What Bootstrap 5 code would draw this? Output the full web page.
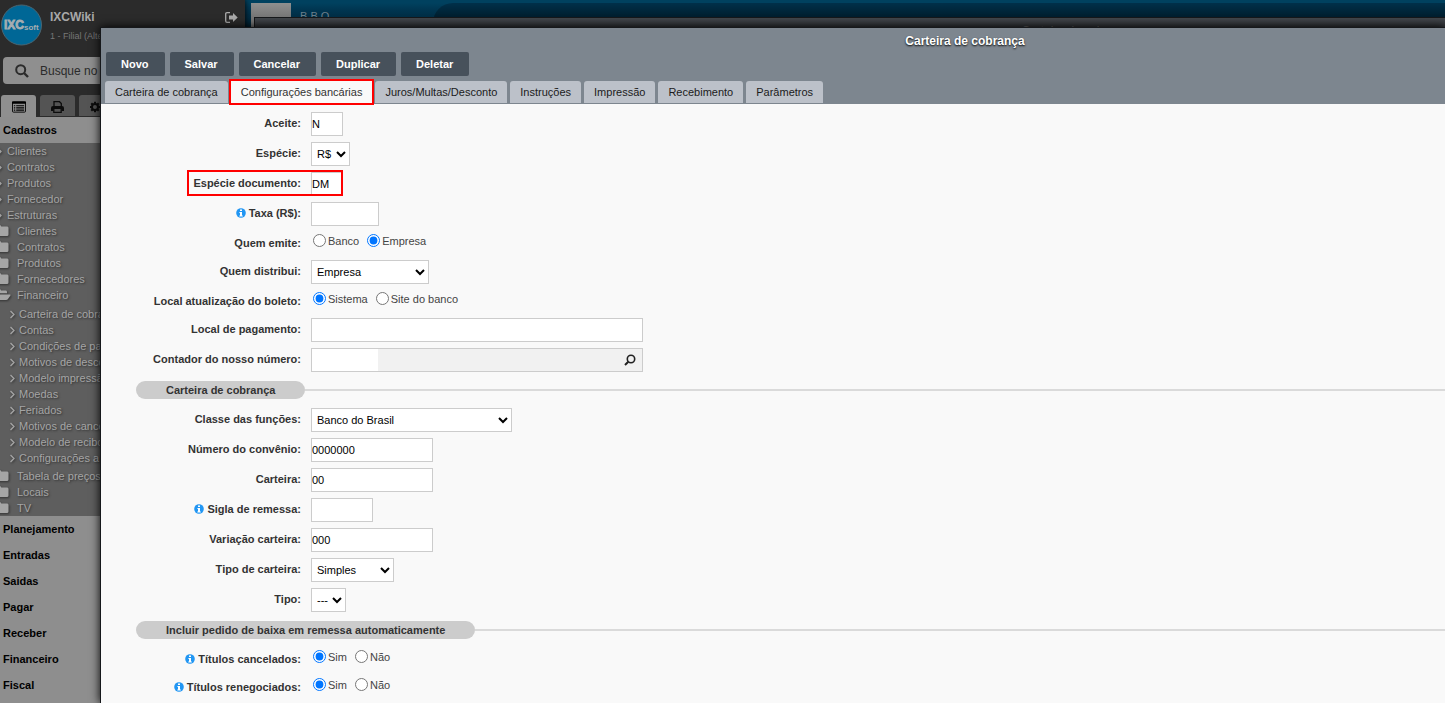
<!DOCTYPE html>
<html lang="pt-BR">
<head>
<meta charset="utf-8">
<meta name="viewport" content="width=device-width, initial-scale=1">
<title>IXCWiki - Carteira de cobrança</title>
<link href="https://cdn.jsdelivr.net/npm/bootstrap@5.3.0/dist/css/bootstrap.min.css" rel="stylesheet">
<style>
  body { font: 11px/16px "Liberation Sans", Arial, sans-serif; color: #333; background: #003f5c; }
  a { color: inherit; text-decoration: none; }
  button, input, select { font: inherit; color: #000; }
  .desktop { height: 100vh; }

  /* Sidebar */
  .side { width: 245px; background: #8e8e8e; color: #000; box-shadow: 0 0 6px #000; z-index: 1; }
  .side-top { background: #2b2b2b; }
  .profile { height: 57px; padding: 4px 7px 0 0; color: #aaa; }
  .profile-name { font-size: 12px; margin-top: 5px; color: #a8a8a8; }
  .profile-branch { font-size: 9px; color: #777; margin-top: 3px; }
  .side-search { height: 27px; margin: 0 3px; padding-left: 12px; border-radius: 4px; background: #8f8f8f; }
  .side-search input { background: none; border: 0; outline: 0; padding: 0; margin-left: 3px; font-size: 12px; color: #2b2b2b; }
  .side-search input::placeholder { color: #2b2b2b; opacity: 1; }
  .side-tabs { padding: 11px 0 0 1px; gap: 4px; }
  .side-tabs button { width: 35px; height: 21px; border: 0; border-radius: 3px 3px 0 0; background: #545454; padding: 0; margin-bottom: 1px; }
  .side-tabs .on { background: #8f8f8f; height: 22px; margin-bottom: 0; }
  .side-group { height: 26px; line-height: 26px; padding-left: 3px; font-weight: bold; }
  .tree { background: #5e5e5e; color: #a5a5a5; text-shadow: 1px 1px 2px #333; }
  .tree a { display: flex; align-items: center; height: 16px; white-space: nowrap; }
  .tree svg { flex: none; filter: drop-shadow(1px 1px 1px #333); }
  .leaf svg { margin: 0 4px 0 -5px; }
  .folder svg { margin: 0 8px 2px -5px; }
  .folder .expanded svg { margin-right: 6px; }
  .subtree { padding: 3px 0 2px 8px; }
  .subtree svg { margin-right: 3px; }

  /* Workspace behind the windows */
  .workspace { background: linear-gradient(#00415f 3px, #003550 10px, #002436 27px); }
  .work-banner { margin: 3px 0 0 188px; height: 60px; border-radius: 20px 0 0 0; background: linear-gradient(#00304a, #001926 18px); }
  .work-logo { left: 6px; top: 3px; width: 40px; height: 60px; background: linear-gradient(#8f8f8f, #777 14px); }
  .work-title { left: 55px; top: 8px; font-size: 11px; color: #6b7f8a; }

  /* Windows */
  .win { border: 1px solid #16181b; border-right: 0; border-bottom: 0; right: 0; }
  .win-back { left: 254px; top: 17px; height: 40px; padding: 5px 0 0 455px; z-index: 2; background: linear-gradient(#43474c, #2f3236 10px); color: #666; font-size: 12px; }
  .win-front { left: 100px; top: 27px; bottom: 0; z-index: 3; background: #f9f9f9; box-shadow: 0 0 9px #000; overflow: hidden; }
  .win-head { background: #7d868f; padding-bottom: 1px; }
  .win-title { font-size: 12px; line-height: 16px; padding: 5px 0 3px 384px; color: #fff; text-shadow: 0 1px 2px #000; }
  .tools { padding-left: 5px; gap: 5px; }
  .tools button { height: 24px; padding: 0 16px 0 15px; border: 0; border-radius: 2px; background: #47515b; color: #fff; font-weight: bold; }
  .tabbar { padding: 5px 0 0 4px; gap: 3px; }
  .tabbar a { height: 22px; line-height: 22px; padding: 0 10px; border-radius: 3px 3px 0 0; background: #bcc1c9; color: #1b1b1b; }
  .tabbar .on { background: #f9f9f9; color: #333; border-radius: 0; }
  .marked { outline: 2px solid #f00; }

  /* Form */
  .sheet { margin-left: 11px; padding-top: 8px; gap: 6px; }
  .line { gap: 10px; }
  .line > .caption { width: 189px; line-height: 22px; font-weight: bold; text-align: right; flex: none; color: #333; }
  .line input[type=text], .line select, .lookup { height: 24px; border: 1px solid #ccc; border-radius: 0; background: #fff; }
  .line input[type=text] { padding: 0; }
  .line select { padding: 0 1px; }
  .radios { height: 18px; line-height: 18px; padding-left: 2px; gap: 8px; color: #444; }
  .radios label { display: flex; align-items: center; gap: 2px; }
  .radios input { width: 13px; height: 13px; margin: 0 0 2px; }
  .w-tiny { width: 32px; } .w-opt { width: 39px; } .w-dash { width: 35px; } .w-tax { width: 68px; } .w-sig { width: 62px; }
  .w-kind { width: 83px; } .w-dist { width: 118px; } .w-code { width: 122px; } .w-bank { width: 201px; } .w-full { width: 332px; }
  .lookup { background: #f1f1f1; }
  .line .lookup input { width: 66px; height: 22px; border: 0; }
  .lookup button { border: 0; background: none; padding: 0 6px; display: flex; align-items: center; }
  .sect { height: 24px; margin-left: 24px; }
  .sect h2 { margin: 0; height: 18px; padding: 0 30px; border-radius: 9px; background: #ccc; font-size: 11px; line-height: 18px; font-weight: bold; }
  .sect span { height: 2px; background: #dadada; }
  .mark-box { left: 75px; top: -2px; width: 156px; height: 26px; border: 2px solid #f00; pointer-events: none; }
  .info { margin: -2px 3px 0 0; }
</style>
</head>
<body>
<svg class="d-none" aria-hidden="true">
  <symbol id="chev" viewBox="0 0 8 9"><path d="M2.500 1l3.500 3.500L2.500 8" fill="none" stroke="#a5a5a5" stroke-width="1.300"/></symbol>
  <symbol id="fold" viewBox="0 0 14 11"><path d="M0 1.500Q0 0 1.500 0h3.300Q6 0 6.300 1.500h6Q13.500 1.500 13.500 3v6.500Q13.500 11 12 11H1.500Q0 11 0 9.500z" fill="#a5a5a5"/></symbol>
  <symbol id="open" viewBox="0 0 16 11"><path d="M0 9V1.500Q0 0 1.500 0h3Q6 0 6 1.500h5Q12 1.500 12 3v1.300H5Q3.500 4.300 2.600 5.500z" fill="#a5a5a5"/><path d="M1 11l2.700-4.500Q4.200 5.400 5.500 5.400H15q1 0 .4 1L13 10q-.6 1-2 1z" fill="#a5a5a5"/></symbol>
  <symbol id="inf" viewBox="0 0 10 10"><circle cx="5" cy="5" r="4.800" fill="#2196f3"/><path d="M4 1.500h2v1.600H4zM3.400 4H6v3.400h.8v1H3.300v-1H4V5h-.6z" fill="#fff"/></symbol>
</svg>

<div class="desktop d-flex position-relative overflow-hidden">
  <aside class="side flex-shrink-0 overflow-hidden">
    <div class="side-top">
      <div class="profile d-flex">
        <svg width="42" height="43" viewBox="0 0 42 43" role="img" aria-label="IXCsoft"><circle cx="21.500" cy="21" r="20" fill="#006796" stroke="#4b6571"/><text x="4" y="25" font-size="12" font-weight="bold" fill="#a5adb1" stroke="#a5adb1" stroke-width=".8">IXC</text><text x="24" y="26" font-size="8" font-weight="bold" fill="#a5adb1">soft</text></svg>
        <div class="ms-2 ps-0 flex-grow-1">
          <div class="profile-name fw-bold">IXCWiki</div>
          <div class="profile-branch">1 - Filial (Alternativa)</div>
        </div>
        <a href="#" aria-label="Sair"><svg class="mt-2" width="13" height="11" viewBox="0 0 13 11"><path d="M5 .7H2Q.7.700.7 2v7q0 1.300 1.300 1.300h3" fill="none" stroke="#aaa" stroke-width="1.300"/><path d="M4 3.500h4V1l4.700 4.500L8 10V7.500H4z" fill="#aaa"/></svg></a>
      </div>
      <div class="side-search d-flex align-items-center">
        <svg class="me-2" width="14" height="14" viewBox="0 0 14 14"><circle cx="5.700" cy="5.700" r="4.500" fill="none" stroke="#2b2b2b" stroke-width="2"/><path d="M9 9l4 4" stroke="#2b2b2b" stroke-width="2.400"/></svg>
        <input class="flex-grow-1" type="text" aria-label="Busca" placeholder="Busque no menu">
      </div>
      <div class="side-tabs d-flex align-items-end">
        <button class="on" type="button" aria-label="Menu"><svg width="14" height="12" viewBox="0 0 15 12"><rect x=".5" y=".5" width="14" height="11" rx="1" fill="none" stroke="#000"/><path d="M0 0h15v2.500H0zM2 4h1.500v1.300H2zM4.500 4H13v1.300H4.500zM2 6.300h1.500v1.300H2zM4.500 6.300H13v1.300H4.500zM2 8.600h1.500v1.300H2zM4.500 8.600H13v1.300H4.500z"/></svg></button>
        <button type="button" aria-label="Relatórios"><svg width="13" height="12" viewBox="0 0 13 12"><path d="M3 6V.7h5.500L10.300 2.500V6" fill="none" stroke="#0c0c0c" stroke-width="1.300"/><path d="M0 7q0-2 2-2h9q2 0 2 2v3h-2.500V8h-8v2H0z" fill="#0c0c0c"/><path d="M2.800 8v3.300h7.400V8" fill="none" stroke="#0c0c0c" stroke-width="1.300"/></svg></button>
        <button type="button" aria-label="Configurações"><svg width="14" height="12" viewBox="0 0 14 12"><circle cx="5" cy="6" r="3" fill="none" stroke="#0c0c0c" stroke-width="2"/><path d="M5 .8v2M5 9.200v2M0 6h2M8 6h2M1.300 2.300l1.400 1.400M7.300 8.300l1.400 1.400M1.300 9.700l1.400-1.400M7.300 3.700l1.400-1.400" stroke="#0c0c0c" stroke-width="2"/><circle cx="12" cy="3" r="1.500"/><circle cx="12" cy="9" r="1.500"/></svg></button>
      </div>
    </div>
    <nav>
      <a class="side-group d-block" href="#">Cadastros</a>
      <div class="tree">
        <div class="leaf">
          <a href="#"><svg width="8" height="9"><use href="#chev"/></svg>Clientes</a>
          <a href="#"><svg width="8" height="9"><use href="#chev"/></svg>Contratos</a>
          <a href="#"><svg width="8" height="9"><use href="#chev"/></svg>Produtos</a>
          <a href="#"><svg width="8" height="9"><use href="#chev"/></svg>Fornecedor</a>
          <a href="#"><svg width="8" height="9"><use href="#chev"/></svg>Estruturas</a>
        </div>
        <div class="folder">
          <a href="#"><svg width="14" height="11"><use href="#fold"/></svg>Clientes</a>
          <a href="#"><svg width="14" height="11"><use href="#fold"/></svg>Contratos</a>
          <a href="#"><svg width="14" height="11"><use href="#fold"/></svg>Produtos</a>
          <a href="#"><svg width="14" height="11"><use href="#fold"/></svg>Fornecedores</a>
          <a class="expanded" href="#"><svg width="16" height="11"><use href="#open"/></svg>Financeiro</a>
        </div>
        <div class="subtree">
          <a href="#"><svg width="8" height="9"><use href="#chev"/></svg>Carteira de cobrança</a>
          <a href="#"><svg width="8" height="9"><use href="#chev"/></svg>Contas</a>
          <a href="#"><svg width="8" height="9"><use href="#chev"/></svg>Condições de pagamento</a>
          <a href="#"><svg width="8" height="9"><use href="#chev"/></svg>Motivos de desconto</a>
          <a href="#"><svg width="8" height="9"><use href="#chev"/></svg>Modelo impressão</a>
          <a href="#"><svg width="8" height="9"><use href="#chev"/></svg>Moedas</a>
          <a href="#"><svg width="8" height="9"><use href="#chev"/></svg>Feriados</a>
          <a href="#"><svg width="8" height="9"><use href="#chev"/></svg>Motivos de cancelamento</a>
          <a href="#"><svg width="8" height="9"><use href="#chev"/></svg>Modelo de recibo</a>
          <a href="#"><svg width="8" height="9"><use href="#chev"/></svg>Configurações a pagar</a>
        </div>
        <div class="folder">
          <a href="#"><svg width="14" height="11"><use href="#fold"/></svg>Tabela de preços</a>
          <a href="#"><svg width="14" height="11"><use href="#fold"/></svg>Locais</a>
          <a href="#"><svg width="14" height="11"><use href="#fold"/></svg>TV</a>
        </div>
      </div>
      <a class="side-group d-block" href="#">Planejamento</a>
      <a class="side-group d-block" href="#">Entradas</a>
      <a class="side-group d-block" href="#">Saidas</a>
      <a class="side-group d-block" href="#">Pagar</a>
      <a class="side-group d-block" href="#">Receber</a>
      <a class="side-group d-block" href="#">Financeiro</a>
      <a class="side-group d-block" href="#">Fiscal</a>
    </nav>
  </aside>

  <div class="workspace flex-grow-1 position-relative">
    <div class="work-banner"></div>
    <div class="work-logo position-absolute"></div>
    <div class="work-title position-absolute">B B O —</div>
  </div>

  <section class="win win-back position-absolute text-center">Carteira de cobrança</section>

  <section class="win win-front position-absolute">
    <header class="win-head">
      <h1 class="win-title text-center fw-bold m-0">Carteira de cobrança</h1>
      <div class="tools d-flex">
        <button type="button">Novo</button>
        <button type="button">Salvar</button>
        <button type="button">Cancelar</button>
        <button type="button">Duplicar</button>
        <button type="button">Deletar</button>
      </div>
      <nav class="tabbar d-flex">
        <a href="#">Carteira de cobrança</a>
        <a class="on marked" href="#" aria-current="page">Configurações bancárias</a>
        <a href="#">Juros/Multas/Desconto</a>
        <a href="#">Instruções</a>
        <a href="#">Impressão</a>
        <a href="#">Recebimento</a>
        <a href="#">Parâmetros</a>
      </nav>
    </header>

    <form class="sheet d-flex flex-column">
      <div class="line d-flex"><label class="caption" for="aceite">Aceite:</label><input class="w-tiny" id="aceite" type="text" value="N"></div>
      <div class="line d-flex"><label class="caption" for="especie">Espécie:</label><select class="w-opt" id="especie"><option>R$</option></select></div>
      <div class="line d-flex position-relative"><label class="caption" for="documento">Espécie documento:</label><input class="w-tiny" id="documento" type="text" value="DM"><div class="mark-box position-absolute"></div></div>
      <div class="line d-flex"><label class="caption" for="taxa"><svg class="info" width="10" height="10"><use href="#inf"/></svg>Taxa (R$):</label><input class="w-tax" id="taxa" type="text"></div>
      <div class="line d-flex" role="radiogroup" aria-labelledby="emite"><span class="caption" id="emite">Quem emite:</span>
        <div class="radios d-flex"><label><input type="radio" name="emite">Banco</label><label><input type="radio" name="emite" checked>Empresa</label></div></div>
      <div class="line d-flex"><label class="caption" for="distribui">Quem distribui:</label><select class="w-dist" id="distribui"><option>Empresa</option></select></div>
      <div class="line d-flex" role="radiogroup" aria-labelledby="local"><span class="caption" id="local">Local atualização do boleto:</span>
        <div class="radios d-flex"><label><input type="radio" name="local" checked>Sistema</label><label><input type="radio" name="local">Site do banco</label></div></div>
      <div class="line d-flex"><label class="caption" for="pagamento">Local de pagamento:</label><input class="w-full" id="pagamento" type="text"></div>
      <div class="line d-flex"><label class="caption" for="contador">Contador do nosso número:</label>
        <div class="lookup w-full d-flex justify-content-between"><input id="contador" type="text"><button type="button" aria-label="Buscar contador"><svg width="12" height="12" viewBox="0 0 12 12"><circle cx="7" cy="5" r="3.700" fill="none" stroke="#222" stroke-width="1.600"/><path d="M4.300 7.700L1 11" stroke="#222" stroke-width="2"/></svg></button></div></div>

      <div class="sect d-flex align-items-center"><h2>Carteira de cobrança</h2><span class="flex-grow-1"></span></div>

      <div class="line d-flex"><label class="caption" for="classe">Classe das funções:</label><select class="w-bank" id="classe"><option>Banco do Brasil</option></select></div>
      <div class="line d-flex"><label class="caption" for="convenio">Número do convênio:</label><input class="w-code" id="convenio" type="text" value="0000000"></div>
      <div class="line d-flex"><label class="caption" for="carteira">Carteira:</label><input class="w-code" id="carteira" type="text" value="00"></div>
      <div class="line d-flex"><label class="caption" for="sigla"><svg class="info" width="10" height="10"><use href="#inf"/></svg>Sigla de remessa:</label><input class="w-sig" id="sigla" type="text"></div>
      <div class="line d-flex"><label class="caption" for="variacao">Variação carteira:</label><input class="w-code" id="variacao" type="text" value="000"></div>
      <div class="line d-flex"><label class="caption" for="tipocart">Tipo de carteira:</label><select class="w-kind" id="tipocart"><option>Simples</option></select></div>
      <div class="line d-flex"><label class="caption" for="tipo">Tipo:</label><select class="w-dash" id="tipo"><option>---</option></select></div>

      <div class="sect d-flex align-items-center"><h2>Incluir pedido de baixa em remessa automaticamente</h2><span class="flex-grow-1"></span></div>

      <div class="line d-flex" role="radiogroup" aria-labelledby="cancel"><span class="caption" id="cancel"><svg class="info" width="10" height="10"><use href="#inf"/></svg>Títulos cancelados:</span>
        <div class="radios d-flex"><label><input type="radio" name="cancel" checked>Sim</label><label><input type="radio" name="cancel">Não</label></div></div>
      <div class="line d-flex" role="radiogroup" aria-labelledby="reneg"><span class="caption" id="reneg"><svg class="info" width="10" height="10"><use href="#inf"/></svg>Títulos renegociados:</span>
        <div class="radios d-flex"><label><input type="radio" name="reneg" checked>Sim</label><label><input type="radio" name="reneg">Não</label></div></div>
    </form>
  </section>
</div>
<script src="https://cdn.jsdelivr.net/npm/bootstrap@5.3.0/dist/js/bootstrap.bundle.min.js"></script>
</body>
</html>
